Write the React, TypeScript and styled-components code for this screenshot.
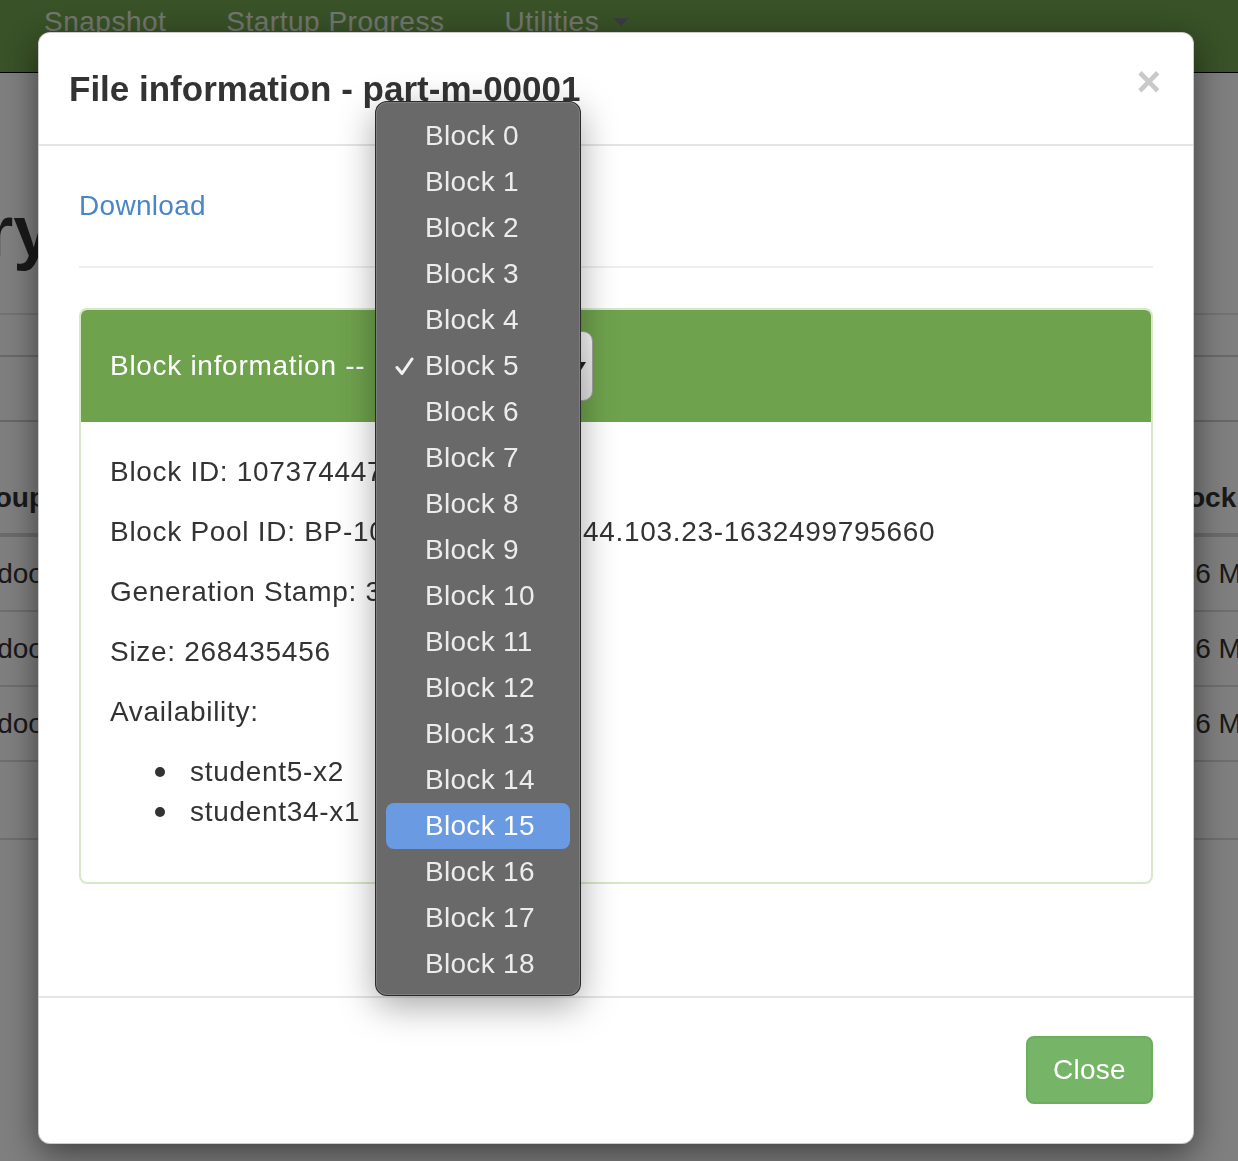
import React from "react";
import styled, { createGlobalStyle } from "styled-components";

const GlobalStyle = createGlobalStyle`
  html, body {
    margin: 0;
    padding: 0;
    overflow: hidden;
  }
  body {
    width: 1238px;
    height: 1161px;
    background: #fff;
    font-family: "Liberation Sans", Arial, sans-serif;
    color: #333;
  }
`;

const blocks = Array.from({ length: 19 }, (_, i) => i);

//뒤쪽 페이지 (Browse Directory)
const Page = styled.div`
  width: 1238px;
  height: 1161px;
`;

const Navbar = styled.nav`
  height: 72px;
  background: #72a44e;
  border-bottom: 1px solid #000;
  display: flex;
  align-items: flex-start;
  padding-left: 14px;
`;

const NavItem = styled.span`
  display: flex;
  align-items: center;
  padding: 2px 30px 0;
  font-size: 28px;
  line-height: 40px;
  letter-spacing: 0.5px;
  color: #e6eedf;
  white-space: nowrap;
`;

const Caret = styled.span`
  display: inline-block;
  margin-left: 14px;
  border-top: 8px solid #77778a;
  border-left: 8px solid transparent;
  border-right: 8px solid transparent;
`;

const PageTitle = styled.h1`
  margin: 119px 0 0 -543px;
  font-size: 72px;
  line-height: 79px;
  font-weight: bold;
  color: #333;
  white-space: nowrap;
`;

const Band = styled.div<{ $h: number; $line: string }>`
  height: ${p => p.$h}px;
  border-top: 2px solid ${p => p.$line};
`;

const FirstBand = styled(Band)`
  margin-top: 42px;
`;

const Table = styled.div`
  margin-left: -38px;
  display: grid;
  grid-template-columns: 1198px 300px;
  font-size: 28px;
  line-height: 40px;
`;

const HeadCell = styled.div`
  height: 117px;
  box-sizing: border-box;
  display: flex;
  align-items: flex-end;
  padding-bottom: 15px;
  border-top: 2px solid #cfcfcf;
  border-bottom: 4px solid #d6d6d6;
  font-weight: bold;
  white-space: nowrap;
`;

const Cell = styled.div`
  height: 75px;
  box-sizing: border-box;
  display: flex;
  align-items: center;
  padding-left: 4px;
  border-bottom: 2px solid #dcdcdc;
  white-space: nowrap;
`;

const TailBand = styled.div`
  height: 76px;
  border-bottom: 2px solid #dcdcdc;
`;

//모달
const Backdrop = styled.div`
  position: fixed;
  inset: 0;
  background: rgba(0, 0, 0, 0.5);
`;

const Dialog = styled.div`
  position: relative;
  margin: 32px 0 0 38px;
  width: 1156px;
  box-sizing: border-box;
  background: #fff;
  border: 1px solid rgba(0, 0, 0, 0.2);
  border-radius: 12px;
  box-shadow: 0 10px 34px rgba(0, 0, 0, 0.5);
`;

const Header = styled.div`
  display: flex;
  justify-content: space-between;
  align-items: flex-start;
  padding: 30px;
  border-bottom: 2px solid #e5e5e5;
`;

const Title = styled.h4`
  margin: 0;
  font-size: 35px;
  line-height: 51px;
  font-weight: bold;
  color: #333;
`;

const CloseX = styled.button`
  margin: -2px 2px 0 0;
  padding: 0;
  border: none;
  background: transparent;
  font-family: "Liberation Sans", Arial, sans-serif;
  font-size: 42px;
  line-height: 42px;
  font-weight: bold;
  color: #c9c9c9;
`;

const Body = styled.div`
  padding: 40px 40px 72px;
  font-size: 28px;
  line-height: 40px;
  letter-spacing: 0.7px;
`;

const DownloadLink = styled.a`
  display: block;
  color: #4a86c6;
  text-decoration: none;
  letter-spacing: 0.3px;
`;

const Rule = styled.hr`
  margin: 40px 0;
  border: 0;
  border-top: 2px solid #eee;
`;

const Panel = styled.div`
  margin-bottom: 40px;
  border: 2px solid #d6e9c6;
  border-radius: 8px;
`;

const PanelHeading = styled.div`
  display: flex;
  align-items: center;
  padding: 21px 29px;
  background: #6fa24d;
  color: #fff;
  border-radius: 6px 6px 0 0;
  white-space: pre;
`;

const Select = styled.div`
  margin-left: 14px;
  width: 214px;
  height: 70px;
  box-sizing: border-box;
  display: flex;
  align-items: center;
  justify-content: space-between;
  padding: 0 6px 0 42px;
  border: 1px solid #a3a3a3;
  border-radius: 10px;
  background: linear-gradient(#f8f8f8, #e2e2e2);
  color: #111;
`;

const PanelBody = styled.div`
  padding: 30px 29px;
`;

const Line = styled.p`
  margin: 0 0 20px;
  white-space: nowrap;
`;

const Hosts = styled.ul`
  margin: 0 0 20px;
  padding-left: 80px;
  list-style: none;
`;

const Host = styled.li`
  display: flex;
  align-items: center;

  &::before {
    content: "";
    flex: none;
    width: 10px;
    height: 10px;
    margin: 0 25px 0 -35px;
    border-radius: 50%;
    background: #333;
  }
`;

const Footer = styled.div`
  display: flex;
  justify-content: flex-end;
  padding: 38px 40px 39px;
  border-top: 2px solid #e5e5e5;
`;

const CloseButton = styled.button`
  height: 68px;
  padding: 0 25px;
  border: 2px solid #6cae5e;
  border-radius: 8px;
  background: #76b568;
  color: #fff;
  font-family: "Liberation Sans", Arial, sans-serif;
  font-size: 28px;
  letter-spacing: 0.3px;
`;

//네이티브 셀렉트 팝업
const Menu = styled.div`
  position: absolute;
  top: 68px;
  left: 336px;
  width: 206px;
  box-sizing: border-box;
  padding: 11px 10px 8px;
  border: 1px solid rgba(0, 0, 0, 0.6);
  border-radius: 12px;
  background: #696969;
  box-shadow: inset 0 0 0 1px rgba(255, 255, 255, 0.14),
    0 10px 36px rgba(0, 0, 0, 0.35);
  z-index: 10;
`;

const MenuItem = styled.div<{ $active?: boolean }>`
  display: flex;
  align-items: center;
  height: 46px;
  border-radius: 8px;
  background: ${p => (p.$active ? "#6a9ae2" : "transparent")};
  color: ${p => (p.$active ? "#fff" : "#ececec")};
  font-size: 28px;
  letter-spacing: 0.3px;
`;

const CheckSlot = styled.span`
  width: 39px;
  height: 46px;
  display: flex;
  align-items: center;
  padding-left: 9px;
  box-sizing: border-box;
`;

const Check = () => (
  <svg width="19" height="19" viewBox="0 0 19 19">
    <path
      d="M2 10.5 L7 16.5 L17 2"
      fill="none"
      stroke="#f2f2f2"
      strokeWidth="3"
      strokeLinecap="round"
      strokeLinejoin="round"
    />
  </svg>
);

const SelectArrow = () => (
  <svg width="10" height="8" viewBox="0 0 10 8">
    <path d="M0 0 L10 0 L5 8 Z" fill="#222" />
  </svg>
);

const App = () => {
  return (
    <>
      <GlobalStyle />
      <Page>
        <Navbar>
          <NavItem>Snapshot</NavItem>
          <NavItem>Startup Progress</NavItem>
          <NavItem>
            Utilities<Caret />
          </NavItem>
        </Navbar>
        <PageTitle>Browse Directory</PageTitle>
        <FirstBand $h={40} $line="#e4e4e4" />
        <Band $h={63} $line="#d2d2d2" />
        <Table>
          <HeadCell>Group</HeadCell>
          <HeadCell>Block Size</HeadCell>
          <Cell>hadoop</Cell>
          <Cell>256 MB</Cell>
          <Cell>hadoop</Cell>
          <Cell>256 MB</Cell>
          <Cell>hadoop</Cell>
          <Cell>256 MB</Cell>
        </Table>
        <TailBand />
      </Page>

      <Backdrop>
        <Dialog>
          <Header>
            <Title>File information - part-m-00001</Title>
            <CloseX>×</CloseX>
          </Header>
          <Body>
            <DownloadLink href="#">Download</DownloadLink>
            <Rule />
            <Panel>
              <PanelHeading>
                Block information -- 
                <Select>
                  <span>Block 5</span>
                  <SelectArrow />
                </Select>
              </PanelHeading>
              <PanelBody>
                <Line>Block ID: 1073744475</Line>
                <Line>Block Pool ID: BP-1050417327-10.244.103.23-1632499795660</Line>
                <Line>Generation Stamp: 3651</Line>
                <Line>Size: 268435456</Line>
                <Line>Availability:</Line>
                <Hosts>
                  <Host>student5-x2</Host>
                  <Host>student34-x1</Host>
                </Hosts>
              </PanelBody>
            </Panel>
          </Body>
          <Footer>
            <CloseButton>Close</CloseButton>
          </Footer>

          <Menu>
            {blocks.map(i => (
              <MenuItem key={i} $active={i === 15}>
                <CheckSlot>{i === 5 && <Check />}</CheckSlot>
                Block {i}
              </MenuItem>
            ))}
          </Menu>
        </Dialog>
      </Backdrop>
    </>
  );
};

export default App;
